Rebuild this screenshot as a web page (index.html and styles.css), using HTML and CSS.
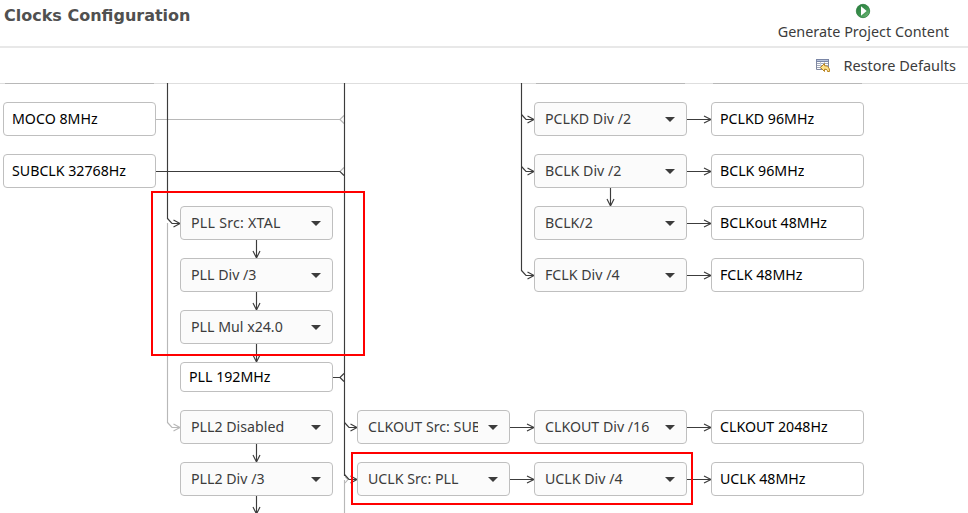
FILE: index.html
```html
<!DOCTYPE html>
<html lang="en">
<head>
<meta charset="utf-8">
<title>Clocks Configuration</title>
<link rel="stylesheet" href="styles.css">
</head>
<body>
<header class="header">
  <h1 class="title">Clocks Configuration</h1>
  <button class="generate">
    <svg width="16" height="16" viewBox="0 0 16 16"><defs><linearGradient id="g" x1="0" y1="0" x2="1" y2="1"><stop offset="0" stop-color="#267a3b"/><stop offset=".6" stop-color="#3f9652"/><stop offset="1" stop-color="#8bc58a"/></linearGradient></defs><circle cx="8" cy="8" r="6.700" fill="url(#g)" stroke="#2c7c3e" stroke-width=".8"/><path d="M6 3.200 11.700 8 6 12.800z" fill="#fff"/></svg>
    <span class="generate-label">Generate Project Content</span>
  </button>
</header>
<div class="toolbar">
  <button class="restore">
    <svg width="16" height="16" viewBox="0 0 16 16"><path d="M1.500 2.500h12v10h-12z" fill="#fff" stroke="#8088a0"/><path d="M1 2h13v3H1z" fill="#7a86a6"/><path d="M2 3.500h11" stroke="#b8c4dc"/><path d="M2 6.500h11M2 8.500h11M2 10.500h11" stroke="#a2a9ba"/><path d="M5.500 5v7M9.500 5v7" stroke="#c3c8d4"/><path d="M5.500 10.500 9.500 6.500v2.300c3 0 5.300 1.700 5 5.700h-2c0-1.700-.8-2.300-3-2.300v2.300z" fill="#ffe28a" stroke="#b98320"/></svg>
    <span class="restore-label">Restore Defaults</span>
  </button>
</div>
<main class="canvas">
  <svg class="wires" width="968" height="430" viewBox="0 83 968 430">
    <defs>
      <g id="right"><path d="M0 .5h23M17 -3l7 3.500-7 3.500"/></g>
      <g id="down"><path d="M.5 0v18M-3 11l3.500 7 3.500-7"/></g>
      <g id="bend"><path d="M0 -4.500 4.500 .5H12.500M6 -3l6.500 3.500L6 4"/></g>
    </defs>
    <path class="edge" d="M0 83.500h968"/>
    <g class="wire muted">
      <path d="M5 83.500h149M536 83.500h149M713 83.500h149"/>
      <path d="M156 119.500h184l4-4M340 119.500l4 4M340 171.500l4-4"/>
      <path d="M167.500 223v200M344.500 480v33M345 483l3-3.500-3-3"/>
      <use href="#bend" x="167.500" y="427"/>
    </g>
    <g class="wire">
      <path d="M167.500 83v136M344.500 83v393M521.500 83v188"/>
      <path d="M156 171.500h184l4 4M333 377.500h7l4-4M340 377.500l4 4"/>
      <use href="#bend" x="167.500" y="223"/><use href="#bend" x="344.500" y="427"/><use href="#bend" x="344.500" y="479"/>
      <use href="#bend" x="521.500" y="119"/><use href="#bend" x="521.500" y="171"/><use href="#bend" x="521.500" y="275"/>
      <use href="#down" x="256" y="240"/><use href="#down" x="256" y="292"/><use href="#down" x="256" y="344"/><use href="#down" x="256" y="444"/><use href="#down" x="256" y="496"/><use href="#down" x="610" y="188"/>
      <use href="#right" x="687" y="119"/><use href="#right" x="687" y="171"/><use href="#right" x="687" y="223"/><use href="#right" x="687" y="275"/><use href="#right" x="687" y="427"/><use href="#right" x="687" y="479"/>
      <use href="#right" x="510" y="427"/><use href="#right" x="510" y="479"/>
    </g>
  </svg>
  <div class="node out c1 r1"><span>MOCO 8MHz</span></div>
  <div class="node out c1 r2"><span>SUBCLK 32768Hz</span></div>
  <div class="node select c2 r3"><span class="wide">PLL Src: XTAL</span></div>
  <div class="node select c2 r4"><span>PLL Div /3</span></div>
  <div class="node select c2 r5"><span>PLL Mul x24.0</span></div>
  <div class="node out short c2 r6"><span>PLL 192MHz</span></div>
  <div class="node select c2 r7"><span>PLL2 Disabled</span></div>
  <div class="node select c2 r8"><span>PLL2 Div /3</span></div>
  <div class="node select c3 r7"><span>CLKOUT Src: SUBCLK</span></div>
  <div class="node select c3 r8"><span>UCLK Src: PLL</span></div>
  <div class="node select c4 r1"><span>PCLKD Div /2</span></div>
  <div class="node select c4 r2"><span>BCLK Div /2</span></div>
  <div class="node select c4 r3"><span>BCLK/2</span></div>
  <div class="node select c4 r4"><span>FCLK Div /4</span></div>
  <div class="node select c4 r7"><span>CLKOUT Div /16</span></div>
  <div class="node select c4 r8"><span>UCLK Div /4</span></div>
  <div class="node out c5 r1"><span>PCLKD 96MHz</span></div>
  <div class="node out c5 r2"><span>BCLK 96MHz</span></div>
  <div class="node out c5 r3"><span>BCLKout 48MHz</span></div>
  <div class="node out c5 r4"><span>FCLK 48MHz</span></div>
  <div class="node out c5 r7"><span>CLKOUT 2048Hz</span></div>
  <div class="node out c5 r8"><span>UCLK 48MHz</span></div>
  <div class="highlight pll"></div>
  <div class="highlight uclk"></div>
</main>
</body>
</html>
```
FILE: styles.css
```css
* { box-sizing: border-box; }
body { margin: 0; width: 968px; height: 513px; overflow: hidden; background: #fff; color: #3c3c3c; font: 14.2px/20px "Noto Sans", "Open Sans", sans-serif; }
button { font: inherit; color: inherit; background: none; border: 0; padding: 0; }
svg { display: block; flex: none; }
.header { display: flex; justify-content: space-between; align-items: flex-start; height: 48px; padding: 3px 19px 0 4px; border-bottom: 2px solid #e8e8e8; }
.title { margin: 3px 0 0; font: bold 16px/20px "DejaVu Sans", sans-serif; color: #505050; }
.generate { display: flex; flex-direction: column; align-items: center; gap: 3px; font-size: 14.4px; }
.toolbar { display: flex; justify-content: flex-end; align-items: center; height: 35px; padding: 0 12px 2px 0; }
.restore { display: flex; align-items: center; gap: 12px; font-size: 14.5px; }
.canvas { position: relative; height: 430px; overflow: hidden; }
.wires { position: absolute; left: 0; top: 0; }
.edge { stroke: #dedede; }
.wire { fill: none; stroke: #3c3c3c; stroke-width: 1.15; }
.wire.muted { stroke: #b8b8b8; }
.node { position: absolute; display: flex; align-items: center; width: 153px; height: 34px; border: 1px solid #bfbfbf; border-radius: 4px; white-space: nowrap; }
.node span { overflow: hidden; }
.out { padding-left: 8px; background: #fff; color: #000; }
.short { height: 30px; }
.select { padding: 0 11px 0 10px; justify-content: space-between; background: #fbfbfb; }
.select span { width: 110px; }
.select .wide { letter-spacing: .25px; }
.select::after { content: ""; border: 5px solid transparent; border-top-color: #3c3c3c; border-bottom: 0; }
.c1 { left: 3px; } .c2 { left: 180px; } .c3 { left: 357px; } .c4 { left: 534px; } .c5 { left: 711px; }
.r1 { top: 19px; } .r2 { top: 71px; } .r3 { top: 123px; } .r4 { top: 175px; }
.r5 { top: 227px; } .r6 { top: 279px; } .r7 { top: 327px; } .r8 { top: 379px; }
.highlight { position: absolute; border: 2px solid #f00; }
.pll { left: 151px; top: 108px; width: 214px; height: 165px; }
.uclk { left: 351px; top: 369px; width: 342px; height: 53px; }
```
